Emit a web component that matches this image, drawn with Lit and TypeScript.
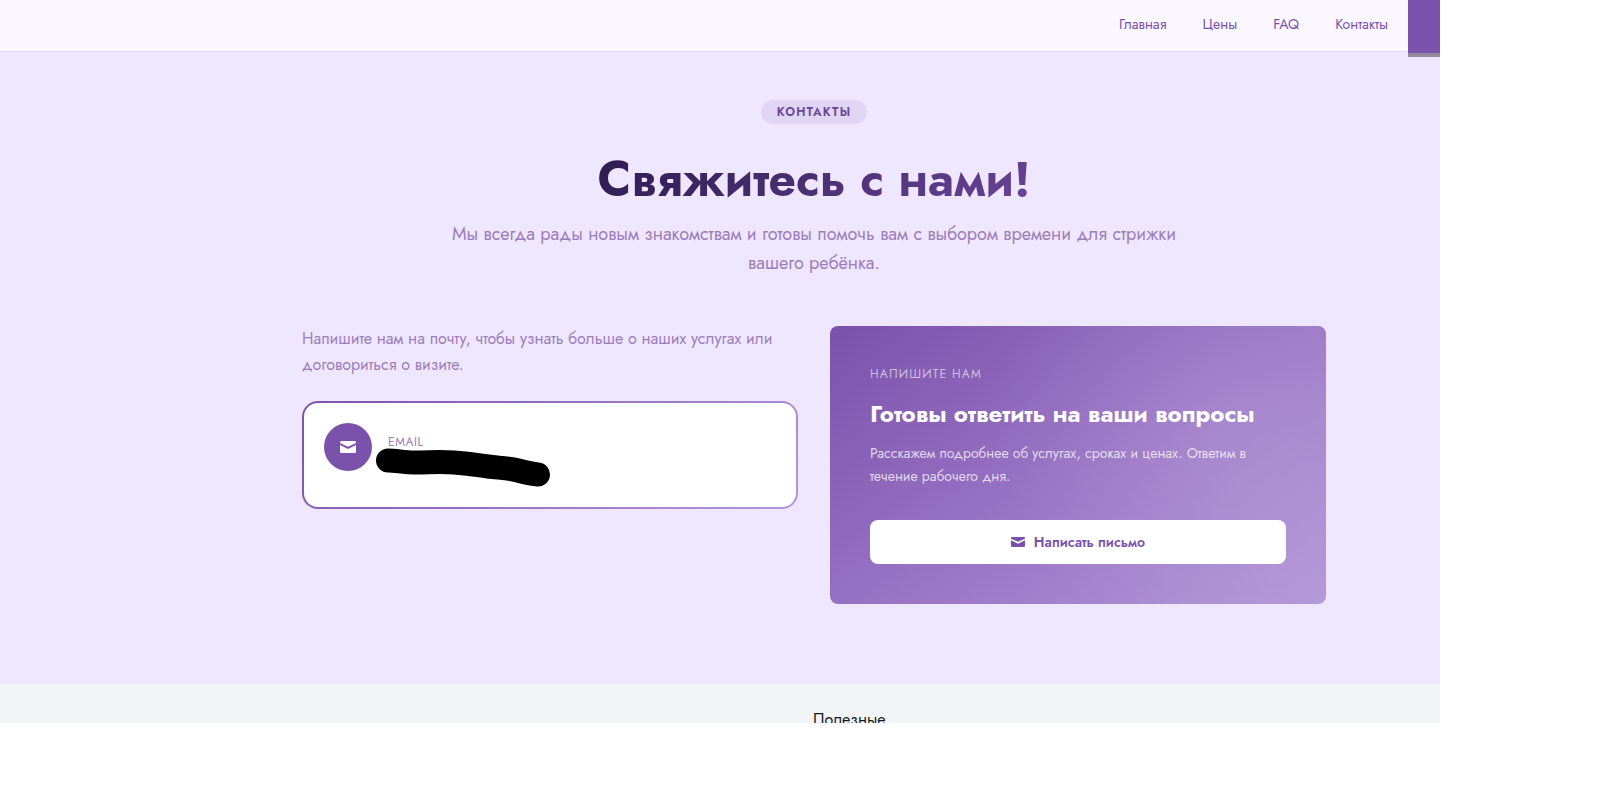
import { LitElement, html, css, svg } from "lit";
import { customElement } from "lit/decorators.js";

const links = [
  { label: "Главная", href: "#home" },
  { label: "Цены", href: "#prices" },
  { label: "FAQ", href: "#faq" },
  { label: "Контакты", href: "#contacts" },
];

const envelope = svg`
  <path d="M1.500 0h13A1.500 1.500 0 0 1 16 1.500v.5L8 5.800 0 2V1.500A1.500 1.500 0 0 1 1.500 0Z"/>
  <path d="M0 4 8 8l8-4v6.500a1.500 1.500 0 0 1-1.500 1.500h-13A1.500 1.500 0 0 1 0 10.500Z"/>`;

@customElement("site-header")
export class SiteHeader extends LitElement {
  static styles = css`
    :host {
      display: block;
    }
    .bar {
      display: flex;
      justify-content: flex-end;
      align-items: flex-start;
      height: 51px;
      background: #faf7ff;
      border-bottom: 1px solid #e0d6f2;
    }
    .nav {
      display: flex;
      gap: 36px;
      padding: 14px 20px 0 0;
    }
    .link {
      color: #7b52ab;
      font-size: 14px;
      line-height: 20px;
      text-decoration: none;
    }
    .tab {
      position: relative;
      box-sizing: border-box;
      width: 32px;
      height: 57px;
      background: #7b52ab;
      border-bottom: 4px solid #918a9b;
    }
  `;
  render() {
    return html`<header class="bar">
      <nav class="nav">
        ${links.map((l) => html`<a class="link" href=${l.href}>${l.label}</a>`)}
      </nav>
      <div class="tab"></div>
    </header>`;
  }
}

@customElement("contact-card")
export class ContactCard extends LitElement {
  static styles = css`
    :host {
      display: block;
    }
    .card {
      position: relative;
      display: flex;
      gap: 16px;
      height: 64px;
      padding: 20px;
      border: 2px solid transparent;
      border-radius: 16px;
      background:
        linear-gradient(#fff, #fff) padding-box,
        linear-gradient(135deg, #7b52ab, #b497d9) border-box;
    }
    .badge {
      display: flex;
      align-items: center;
      justify-content: center;
      width: 48px;
      height: 48px;
      border-radius: 50%;
      background: #7b52ab;
      fill: #fff;
    }
    .label {
      margin-top: 10px;
      color: #9d7dba;
      font-size: 12px;
      line-height: 18px;
      letter-spacing: 0.05em;
    }
    .scribble {
      position: absolute;
      left: 70px;
      top: 44px;
      fill: none;
      stroke: #000;
      stroke-width: 24px;
      stroke-linecap: round;
      stroke-linejoin: round;
    }
  `;
  render() {
    return html`<div class="card">
      <div class="badge">
        <svg width="16" height="12" viewBox="0 0 16 12">${envelope}</svg>
      </div>
      <div class="label">EMAIL</div>
      <svg class="scribble" width="180" height="44" viewBox="374 448 180 44">
        <path d="M388 461.500C396 461.500 404 463.500 414 463.500C430 463.500 440 462.500 454 463.500C468 464.500 476 466 488 467.500C500 469 508 469 518 471.500C526 473.500 532 475 538 475.500" />
      </svg>
    </div>`;
  }
}

@customElement("write-card")
export class WriteCard extends LitElement {
  static styles = css`
    :host {
      display: block;
    }
    .card {
      padding: 40px;
      border-radius: 8px;
      color: #fff;
      background:
        radial-gradient(circle at 80% 35%, rgba(255, 255, 255, 0.1), transparent 55%),
        linear-gradient(145deg, #7b52ab 0%, #9670c2 45%, #b497d9 100%);
    }
    .eyebrow {
      color: rgba(255, 255, 255, 0.6);
      font-size: 12px;
      line-height: 16px;
      letter-spacing: 0.1em;
    }
    .title {
      margin: 15px 0 12px;
      font-size: 24px;
      line-height: 33px;
      font-weight: 700;
    }
    .text {
      margin: 0;
      color: rgba(255, 255, 255, 0.75);
      font-size: 14px;
      line-height: 23px;
    }
    .button {
      display: flex;
      align-items: center;
      justify-content: center;
      gap: 9px;
      height: 44px;
      margin-top: 32px;
      border-radius: 8px;
      background: #fff;
      color: #7b52ab;
      fill: #7b52ab;
      font-size: 14px;
      font-weight: 600;
      text-decoration: none;
    }
  `;
  render() {
    return html`<section class="card">
      <div class="eyebrow">НАПИШИТЕ НАМ</div>
      <h2 class="title">Готовы ответить на ваши вопросы</h2>
      <p class="text">Расскажем подробнее об услугах, сроках и ценах. Ответим в течение рабочего дня.</p>
      <a class="button" href="#write">
        <svg width="14" height="10" viewBox="0 0 16 12" preserveAspectRatio="none">${envelope}</svg>
        Написать письмо
      </a>
    </section>`;
  }
}

@customElement("app-root")
export class AppRoot extends LitElement {
  static styles = css`
    :host {
      display: block;
      max-width: 1440px;
      font-family: Jost, Lato, sans-serif;
    }
    .contacts {
      padding: 48px 0 80px 188px;
      background: #efe7ff;
    }
    .inner {
      max-width: 1024px;
      margin: 0 auto;
    }
    .intro {
      display: flex;
      flex-direction: column;
      align-items: center;
      text-align: center;
    }
    .pill {
      padding: 0 16px;
      border-radius: 12px;
      background: #e0d6f3;
      color: #6b4397;
      font-size: 12px;
      line-height: 24px;
      font-weight: 600;
      letter-spacing: 0.1em;
    }
    .heading {
      margin: 27px 0 11px;
      font-size: 48px;
      line-height: 58px;
      font-weight: 700;
      color: transparent;
      background: linear-gradient(135deg, #2d1b4e, #6b4397);
      background-clip: text;
      -webkit-background-clip: text;
    }
    .lead {
      max-width: 740px;
      margin: 0 0 48px;
      color: #9d7dba;
      font-size: 18px;
      line-height: 29px;
    }
    .columns {
      display: grid;
      grid-template-columns: 1fr 1fr;
      gap: 32px;
    }
    .note {
      margin: 0 0 23px;
      color: #9d7dba;
      font-size: 16px;
      line-height: 26px;
    }
    .footer {
      display: grid;
      grid-template-columns: 1fr 627px;
      height: 39px;
      overflow: hidden;
      background: #f3f4f6;
    }
    .footer-title {
      grid-column: 2;
      margin: 0;
      padding-top: 22px;
      color: #111827;
      font-size: 16px;
      line-height: 28px;
      font-weight: 400;
    }
  `;
  render() {
    return html`
      <site-header></site-header>
      <main class="contacts">
        <div class="inner">
          <div class="intro">
            <div class="pill">КОНТАКТЫ</div>
            <h1 class="heading">Свяжитесь с нами!</h1>
            <p class="lead">
              Мы всегда рады новым знакомствам и готовы помочь вам с выбором времени для стрижки вашего ребёнка.
            </p>
          </div>
          <div class="columns">
            <div>
              <p class="note">
                Напишите нам на почту, чтобы узнать больше о наших услугах или договориться о визите.
              </p>
              <contact-card></contact-card>
            </div>
            <write-card></write-card>
          </div>
        </div>
      </main>
      <footer class="footer"><h3 class="footer-title">Полезные</h3></footer>
    `;
  }
}
